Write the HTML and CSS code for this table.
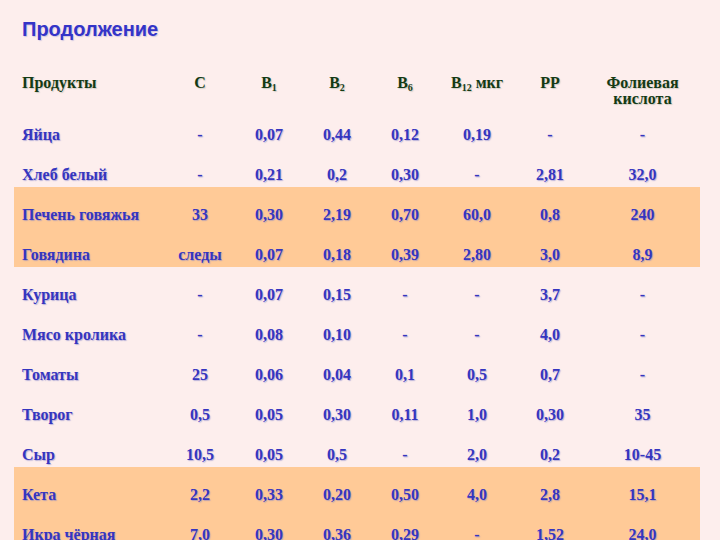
FILE: index.html
```html
<!DOCTYPE html>
<html lang="ru">
<head>
<meta charset="utf-8">
<title>Продолжение</title>
<link rel="stylesheet" href="styles.css">
</head>
<body>
<div class="slide">
  <h1 class="title">Продолжение</h1>
  <table class="vit">
    <colgroup>
      <col class="c-prod"><col class="c-c"><col class="c-b1"><col class="c-b2"><col class="c-b6"><col class="c-b12"><col class="c-pp"><col class="c-fol">
    </colgroup>
    <thead>
      <tr class="head">
        <th class="prod">Продукты</th>
        <th>C</th>
        <th>B<sub>1</sub></th>
        <th>B<sub>2</sub></th>
        <th>B<sub>6</sub></th>
        <th>B<sub>12</sub> мкг</th>
        <th>PP</th>
        <th>Фолиевая<br>кислота</th>
      </tr>
    </thead>
    <tbody>
      <tr><td class="prod">Яйца</td><td>-</td><td>0,07</td><td>0,44</td><td>0,12</td><td>0,19</td><td>-</td><td>-</td></tr>
      <tr><td class="prod">Хлеб белый</td><td>-</td><td>0,21</td><td>0,2</td><td>0,30</td><td>-</td><td>2,81</td><td>32,0</td></tr>
      <tr class="hl"><td class="prod">Печень говяжья</td><td>33</td><td>0,30</td><td>2,19</td><td>0,70</td><td>60,0</td><td>0,8</td><td>240</td></tr>
      <tr class="hl"><td class="prod">Говядина</td><td>следы</td><td>0,07</td><td>0,18</td><td>0,39</td><td>2,80</td><td>3,0</td><td>8,9</td></tr>
      <tr><td class="prod">Курица</td><td>-</td><td>0,07</td><td>0,15</td><td>-</td><td>-</td><td>3,7</td><td>-</td></tr>
      <tr><td class="prod">Мясо кролика</td><td>-</td><td>0,08</td><td>0,10</td><td>-</td><td>-</td><td>4,0</td><td>-</td></tr>
      <tr><td class="prod">Томаты</td><td>25</td><td>0,06</td><td>0,04</td><td>0,1</td><td>0,5</td><td>0,7</td><td>-</td></tr>
      <tr><td class="prod">Творог</td><td>0,5</td><td>0,05</td><td>0,30</td><td>0,11</td><td>1,0</td><td>0,30</td><td>35</td></tr>
      <tr><td class="prod">Сыр</td><td>10,5</td><td>0,05</td><td>0,5</td><td>-</td><td>2,0</td><td>0,2</td><td>10-45</td></tr>
      <tr class="hl"><td class="prod">Кета</td><td>2,2</td><td>0,33</td><td>0,20</td><td>0,50</td><td>4,0</td><td>2,8</td><td>15,1</td></tr>
      <tr class="hl"><td class="prod">Икра чёрная</td><td>7,0</td><td>0,30</td><td>0,36</td><td>0,29</td><td>-</td><td>1,52</td><td>24,0</td></tr>
    </tbody>
  </table>
</div>
</body>
</html>
```
FILE: styles.css
```css
html, body {
  margin: 0;
  padding: 0;
  background: #fdeeed;
}
.slide {
  width: 720px;
  height: 540px;
  overflow: hidden;
  background: #fdeeed;
}
.title {
  margin: 0;
  padding: 17px 0 0 22px;
  height: 25px;
  line-height: 24px;
  font-family: "Liberation Sans", Arial, sans-serif;
  font-weight: bold;
  font-size: 20px;
  color: #3434c8;
  text-shadow: 1px 1px 1px rgba(150, 150, 210, 0.45);
}
.vit {
  margin-left: 14px;
  width: 686px;
  border-collapse: collapse;
  border-spacing: 0;
  table-layout: fixed;
  font-family: "Liberation Serif", "Times New Roman", serif;
  font-weight: bold;
  font-size: 16px;
}
.c-prod { width: 151px; }
.c-c { width: 70px; }
.c-b1 { width: 68px; }
.c-b2 { width: 68px; }
.c-b6 { width: 68px; }
.c-b12 { width: 76px; }
.c-pp { width: 70px; }
.c-fol { width: 115px; }

.vit th,
.vit td {
  padding: 0;
  text-align: center;
  white-space: nowrap;
}
.vit th.prod,
.vit td.prod {
  text-align: left;
  padding-left: 8px;
}
.head th {
  height: 65px;
  box-sizing: border-box;
  padding-top: 33px;
  vertical-align: top;
  line-height: 16px;
  color: #143a14;
  font-weight: bold;
  text-shadow: 1px 1px 1px rgba(120, 140, 120, 0.35);
}
.head sub {
  font-size: 10px;
  line-height: 0;
  vertical-align: -3px;
}
.vit td {
  height: 40px;
  box-sizing: border-box;
  padding-top: 18px;
  padding-bottom: 2px;
  line-height: 20px;
  vertical-align: top;
  color: #3535bf;
  text-shadow: 1px 1px 1px rgba(130, 130, 200, 0.55);
}
.vit tr.hl td {
  background: #ffca97;
}
```
